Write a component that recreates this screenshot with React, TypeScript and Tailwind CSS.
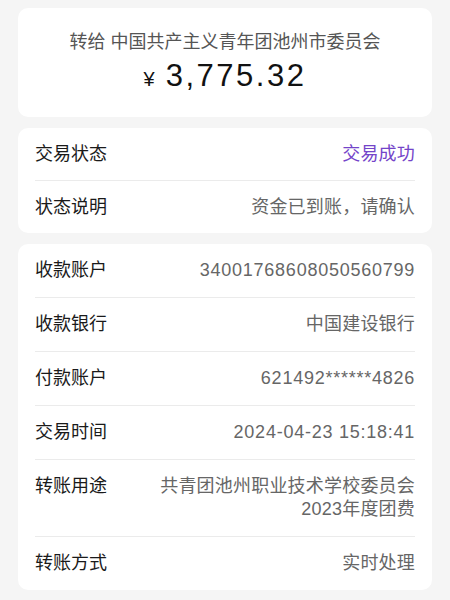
const rows1 = [
  { label: "交易状态", value: ["交易成功"], accent: true },
  { label: "状态说明", value: ["资金已到账，请确认"] },
];

const rows2 = [
  { label: "收款账户", value: ["34001768608050560799"], num: true },
  { label: "收款银行", value: ["中国建设银行"] },
  { label: "付款账户", value: ["621492******4826"], num: true },
  { label: "交易时间", value: ["2024-04-23 15:18:41"], num: true },
  { label: "转账用途", value: ["共青团池州职业技术学校委员会", "2023年度团费"] },
  { label: "转账方式", value: ["实时处理"] },
];

type Row = { label: string; value: string[]; accent?: boolean; num?: boolean };

function InfoCard({ rows, tall }: { rows: Row[]; tall?: boolean }) {
  return (
    <div className="mx-[18px] rounded-[10px] bg-white px-[17px]">
      {rows.map((r, i) => (
        <div
          key={r.label}
          className={
            "flex justify-between py-[15px] " +
            (i < rows.length - 1 ? "border-b border-[#ebebeb]" : "")
          }
        >
          <span className="text-[18px] leading-[22px] text-[#1a1a1a]">{r.label}</span>
          <div
            className={
              "text-right text-[18px] " +
              (tall ? "leading-[23px] " : "leading-[22px] ") +
              (r.num ? "tracking-[0.75px] " : "tracking-[0.2px] ") +
              (r.accent ? "text-[#7444c9]" : "text-[#666666]")
            }
          >
            {r.value.map((v) => (
              <div key={v}>{v}</div>
            ))}
          </div>
        </div>
      ))}
    </div>
  );
}

export default function App() {
  return (
    <div
      className="min-h-[600px] w-[450px] bg-[#f5f5f5] pt-2 pb-3"
      style={{ fontFamily: '"Liberation Sans", "Noto Sans CJK SC", sans-serif' }}
    >
      <div className="mx-[18px] flex h-[109px] flex-col items-center rounded-[10px] bg-white pt-[22px]">
        <div className="text-[18px] leading-[24px] text-[#555555]">
          转给 中国共产主义青年团池州市委员会
        </div>
        <div className="mt-[3px] flex items-baseline text-[#111111]">
          <span className="mr-[11px] text-[20px]">¥</span>
          <span className="text-[31px] leading-[38px] tracking-[2.5px]">3,775.32</span>
        </div>
      </div>
      <div className="mt-[11px]">
        <InfoCard rows={rows1} />
      </div>
      <div className="mt-[11px]">
        <InfoCard rows={rows2} tall />
      </div>
    </div>
  );
}
